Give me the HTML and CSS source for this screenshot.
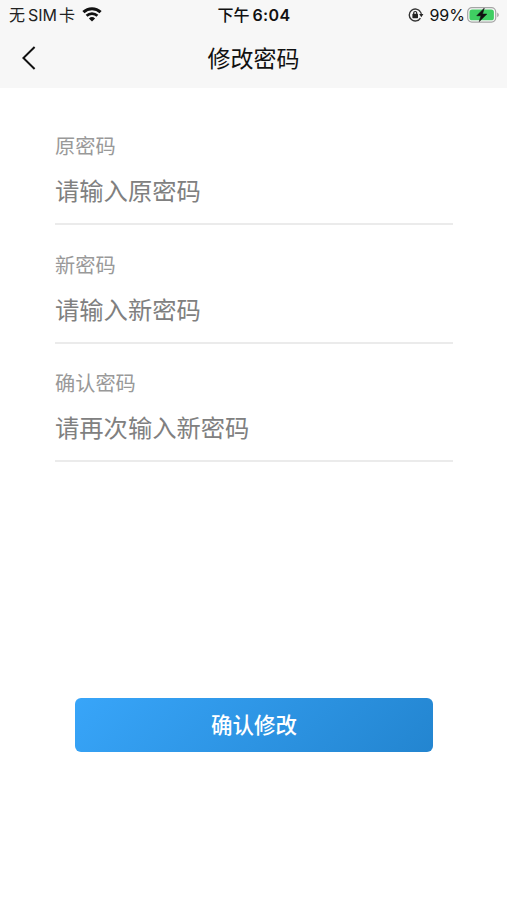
FILE: index.html
```
<!DOCTYPE html>
<html lang="zh-CN">
<head>
  <meta charset="UTF-8">
  <meta name="viewport" content="width=device-width, initial-scale=1.0">
  <title>修改密码</title>
  <link rel="stylesheet" href="styles.css">
</head>
<body>
  <header class="header">
    <div class="status-bar">
      <div class="status-left">
        <span class="carrier">无<span class="sim">SIM</span>卡</span>
        <svg class="wifi" viewBox="0 0 20 15" width="20" height="15">
          <path d="M1.4 5.2A12.4 12.4 0 0 1 18.6 5.2" fill="none" stroke="#111" stroke-width="3"/>
          <path d="M4.6 8.7A7.8 7.8 0 0 1 15.4 8.7" fill="none" stroke="#111" stroke-width="2.7"/>
          <path d="M10 14.6L6.9 11.4A4.5 4.5 0 0 1 13.1 11.4Z" fill="#111"/>
        </svg>
      </div>
      <div class="status-time">下午<span class="clock">6:04</span></div>
      <div class="status-right">
        <svg class="lock" viewBox="0 0 16 14" width="16" height="14">
          <path d="M12.4 3.9A6 6 0 1 0 12.4 10.1" fill="none" stroke="#333" stroke-width="1.4"/>
          <path d="M11.2 6.1H15.4L13.3 9.2Z" fill="#222"/>
          <path d="M12.4 3.9Q13.3 5 13.3 6.5" fill="none" stroke="#333" stroke-width="1.3"/>
          <rect x="4.4" y="5.8" width="5.6" height="4.4" rx=".6" fill="#222"/>
          <path d="M5.7 6.5V5A1.5 1.5 0 0 1 8.7 5V6.5" fill="none" stroke="#222" stroke-width="1.2"/>
        </svg>
        <span class="percent">99%</span>
        <svg class="battery" viewBox="0 0 32 16" width="32" height="16">
          <rect x=".7" y=".7" width="28" height="14.4" rx="4.2" fill="#f7f7f7" stroke="#a5a5a5" stroke-width="1.2"/>
          <rect x="2.5" y="2.5" width="24.4" height="10.8" rx="2.6" fill="#3fce62"/>
          <path d="M30.2 5.6Q31.8 6.4 31.8 7.9Q31.8 9.4 30.2 10.2Z" fill="#a5a5a5"/>
          <path d="M17.2 1.2L9.8 8.7H14L12.3 14.6L19.8 7.1H15.5Z" fill="#111" stroke="#111" stroke-width=".6"/>
        </svg>
      </div>
    </div>
    <div class="nav-bar">
      <a class="back" href="#">
        <svg viewBox="0 0 14 24" width="14" height="24">
          <path d="M12.6 1L1.4 12L12.6 23" fill="none" stroke="#111" stroke-width="2"/>
        </svg>
      </a>
      <h1>修改密码</h1>
    </div>
  </header>

  <form class="form">
    <div class="field">
      <label for="oldPwd">原密码</label>
      <input type="password" id="oldPwd" placeholder="请输入原密码">
    </div>
    <div class="field">
      <label for="newPwd">新密码</label>
      <input type="password" id="newPwd" placeholder="请输入新密码">
    </div>
    <div class="field">
      <label for="confirmPwd">确认密码</label>
      <input type="password" id="confirmPwd" placeholder="请再次输入新密码">
    </div>
    <button type="button" class="submit">确认修改</button>
  </form>
</body>
</html>
```
FILE: styles.css
```
* {
  box-sizing: border-box;
}
body {
  margin: 0;
  min-height: 900px;
  background: #fff;
  font-family: "Noto Sans CJK SC", sans-serif;
}
.header {
  height: 88px;
  background: #f7f7f7;
  color: #111;
}
.status-bar {
  display: grid;
  grid-template-columns: 1fr auto 1fr;
  align-items: center;
  height: 28px;
  padding: 0 8px 0 9px;
  font-size: 16px;
  line-height: 28px;
}
.status-left, .status-right {
  display: flex;
  align-items: center;
}
.status-right {
  justify-content: flex-end;
}
.sim, .clock, .percent {
  font-family: Inter, sans-serif;
}
.carrier {
  color: #222;
}
.sim {
  margin: 0 2px 0 3px;
}
.wifi {
  margin-left: 7px;
}
.status-time {
  font-weight: 500;
}
.clock {
  margin-left: 3px;
  font-weight: 600;
  letter-spacing: .4px;
}
.percent {
  margin: 0 2px 0 5px;
}
.nav-bar {
  display: grid;
  grid-template-columns: 60px 1fr 60px;
  align-items: center;
  height: 60px;
}
.back {
  display: flex;
  padding-left: 22px;
}
h1 {
  margin: 0;
  padding-bottom: 2px;
  font-size: 23px;
  font-weight: 400;
  line-height: 34px;
  text-align: center;
}
.form {
  padding: 43px 54px 0 55px;
}
.field {
  height: 94px;
  margin-bottom: 24.7px;
  border-bottom: 2px solid #ebebeb;
}
label {
  display: block;
  color: #999;
  font-size: 20.2px;
  line-height: 30px;
}
input {
  display: block;
  width: 100%;
  height: 57px;
  padding: 0;
  border: none;
  outline: none;
  background: none;
  font-family: inherit;
  font-size: 24.3px;
}
input::placeholder {
  color: #808080;
}
.submit {
  display: block;
  width: 358px;
  height: 54px;
  margin: 236px auto 0 20px;
  padding: 0 0 2px;
  border: none;
  border-radius: 6px;
  background: linear-gradient(135deg, #38a5f9, #2385d0);
  color: #fff;
  font-family: inherit;
  font-size: 21.5px;
  font-weight: 500;
  line-height: 52px;
}
```
